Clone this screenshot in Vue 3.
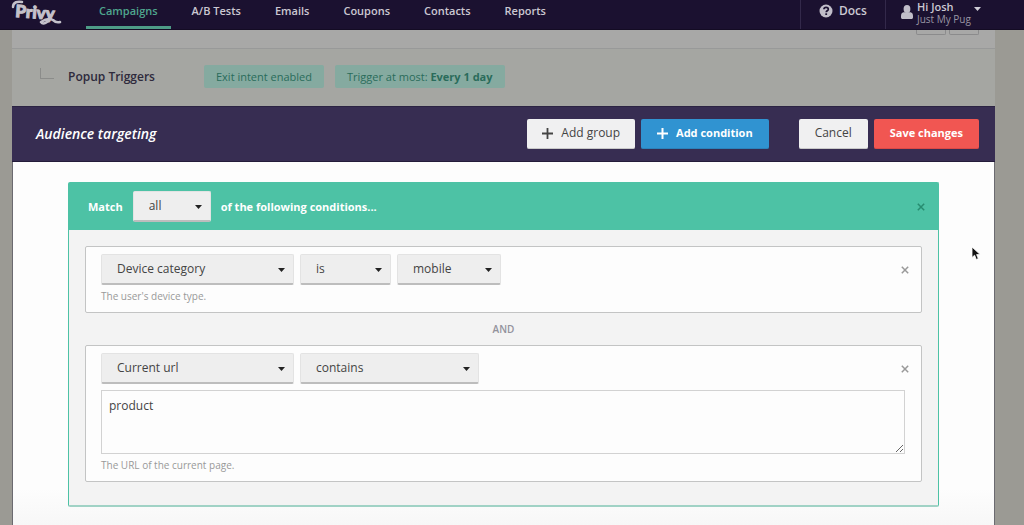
<script setup>
import { ref } from 'vue'

const links = ['Campaigns', 'A/B Tests', 'Emails', 'Coupons', 'Contacts', 'Reports']
const active = 'Campaigns'
const match = ref('all')

const conditions = ref([
  {
    id: 'device',
    hint: "The user's device type.",
    selects: [
      { label: 'Attribute', value: 'Device category', size: 'wide' },
      { label: 'Operator', value: 'is', size: 'small' },
      { label: 'Value', value: 'mobile', size: 'medium' },
    ],
  },
  {
    id: 'url',
    hint: 'The URL of the current page.',
    text: 'product',
    selects: [
      { label: 'Attribute', value: 'Current url', size: 'wide' },
      { label: 'Operator', value: 'contains', size: 'large' },
    ],
  },
])
</script>

<template>
  <div class="page">
    <header class="topbar">
      <a class="logo" href="#" aria-label="Privy">
        <svg width="54" height="27" viewBox="0 0 54 27" aria-hidden="true">
          <text x="4" y="17" transform="rotate(4 4 17)" class="logo-text">Privy</text>
          <path d="M2 7C2 2 7 1 11 2M39 17c-2 6-7 8-9 5 3-2 8-4 12-2 2 2 4 3 7 2" fill="none" stroke="#c4c1ca" stroke-width="2.500" stroke-linecap="round" stroke-linejoin="round" />
        </svg>
      </a>
      <nav class="links" aria-label="Main">
        <a v-for="link in links" :key="link" href="#" :class="{ active: link === active }">{{ link }}</a>
      </nav>
      <a class="docs" href="#">
        <svg width="14" height="14" viewBox="0 0 14 14" aria-hidden="true">
          <circle cx="7" cy="7" r="6.500" fill="#c1bec9" />
          <path d="M4.900 5.300C5 3.900 6 3.300 7.100 3.300c1.200 0 2.200.7 2.200 1.900 0 1.600-2.100 1.600-2.100 3.100" fill="none" stroke="#1b1130" stroke-width="1.700" />
          <rect x="6.300" y="9.300" width="1.800" height="1.700" fill="#1b1130" />
        </svg>
        Docs
      </a>
      <button class="account" type="button">
        <svg class="person" width="12" height="14" viewBox="0 0 12 14" aria-hidden="true">
          <ellipse cx="6" cy="4" rx="3.400" ry="4" fill="#c1bec9" />
          <path d="M2.500 7.200h7C11.300 7.600 12 9 12 11v1.500c0 .9-.7 1.500-1.600 1.500H1.600C.7 14 0 13.400 0 12.500V11c0-2 .7-3.400 2.500-3.800z" fill="#c1bec9" />
        </svg>
        <span class="who"><span class="hi">Hi Josh</span><span class="shop">Just My Pug</span></span>
        <svg class="acc-caret" width="7" height="4" viewBox="0 0 7 4" aria-hidden="true"><path d="M0 0h7L3.500 4z" fill="#d0ced6" /></svg>
      </button>
    </header>

    <main class="sheet">
      <div class="strip"><span class="stub"></span><span class="stub"></span></div>
      <section class="triggers">
        <span class="elbow"></span>
        <h2>Popup Triggers</h2>
        <span class="tag">Exit intent enabled</span>
        <span class="tag">Trigger at most: <b>Every 1 day</b></span>
      </section>

      <section class="targeting">
        <div class="bar">
          <h1>Audience targeting</h1>
          <button class="btn add" type="button">
            <svg width="11" height="11" viewBox="0 0 11 11" aria-hidden="true"><path d="M5.500 0v11M0 5.500h11" stroke="currentColor" stroke-width="1.800" /></svg>
            Add group
          </button>
          <button class="btn add blue" type="button">
            <svg width="11" height="11" viewBox="0 0 11 11" aria-hidden="true"><path d="M5.500 0v11M0 5.500h11" stroke="currentColor" stroke-width="2" /></svg>
            Add condition
          </button>
          <button class="btn cancel" type="button">Cancel</button>
          <button class="btn red" type="button">Save changes</button>
        </div>

        <div class="body">
          <div class="group">
            <div class="group-head">
              <label for="match">Match</label>
              <span class="pick match">
                <select id="match" v-model="match"><option>all</option><option>any</option></select>
                <svg width="7" height="4" viewBox="0 0 7 4" aria-hidden="true"><path d="M0 0h7L3.500 4z" fill="#222" /></svg>
              </span>
              <span class="rest">of the following conditions...</span>
              <button class="close" type="button" aria-label="Remove group">
                <svg width="8" height="8" viewBox="0 0 8 8" aria-hidden="true"><path d="M.8.800l6.400 6.400M7.200.800L.8 7.200" stroke="currentColor" stroke-width="1.500" /></svg>
              </button>
            </div>

            <div class="group-body">
              <template v-for="(c, i) in conditions" :key="c.id">
                <p v-if="i" class="and">AND</p>
                <div class="condition">
                  <div class="row">
                    <span v-for="s in c.selects" :key="s.label" class="pick" :class="s.size">
                      <select v-model="s.value" :aria-label="s.label"><option>{{ s.value }}</option></select>
                      <svg width="7" height="4" viewBox="0 0 7 4" aria-hidden="true"><path d="M0 0h7L3.500 4z" fill="#222" /></svg>
                    </span>
                    <button class="close" type="button" aria-label="Remove condition">
                      <svg width="8" height="8" viewBox="0 0 8 8" aria-hidden="true"><path d="M.8.800l6.400 6.400M7.200.800L.8 7.200" stroke="currentColor" stroke-width="1.500" /></svg>
                    </button>
                  </div>
                  <textarea v-if="c.text !== undefined" v-model="c.text" aria-label="URL"></textarea>
                  <p class="hint">{{ c.hint }}</p>
                </div>
              </template>
            </div>
          </div>
        </div>
      </section>
    </main>

    <svg class="pointer" width="11" height="15" viewBox="0 0 11 15" aria-hidden="true">
      <path d="M1 1v10.500l2.600-2.300 1.700 4.300 2-.9-1.700-4h3.600z" fill="#111" stroke="#fff" stroke-width=".8" />
    </svg>
  </div>
</template>

<style>
body {
  background: #9b9a94;
}
</style>

<style scoped>
* {
  box-sizing: border-box;
}
.page {
  display: flex;
  flex-direction: column;
  min-height: 100vh;
  overflow: hidden;
  font-family: "Open Sans", "Noto Sans", sans-serif;
  font-size: 12px;
  line-height: 16px;
  color: #444;
}
h1, h2, p {
  margin: 0;
}
button, select, textarea {
  font: inherit;
  color: inherit;
}
button {
  cursor: pointer;
}
.topbar {
  display: flex;
  height: 30px;
  padding-left: 11px;
  background: #1b1130;
  border-bottom: 1px solid #140c24;
  color: #cbc8d2;
  font-weight: 600;
}
.topbar a {
  color: inherit;
  text-decoration: none;
}
.logo {
  width: 75px;
}
.logo svg {
  display: block;
}
.logo-text {
  font: 900 17px Lato, sans-serif;
  fill: #c4c1ca;
  stroke: #c4c1ca;
  stroke-width: 1px;
}
.links {
  display: flex;
  flex: 1;
  gap: 8px;
  font-size: 11px;
}
.links a {
  padding: 3px 13px 0;
}
.links .active {
  color: #4fa68e;
  border-bottom: 3px solid #4e9c87;
}
.docs {
  display: flex;
  gap: 6px;
  width: 85px;
  padding: 3px 0 0 18px;
  border-left: 1px solid #33294a;
}
.docs svg {
  margin-top: 1px;
}
.account {
  display: flex;
  gap: 4px;
  width: 139px;
  padding: 0 0 0 15px;
  background: none;
  border: 0;
  border-left: 1px solid #33294a;
  color: #cbc8d2;
  font-weight: 600;
  text-align: left;
}
.person {
  margin-top: 5px;
}
.who {
  display: flex;
  flex-direction: column;
  width: 53px;
  white-space: nowrap;
  line-height: 13px;
}
.hi {
  font-size: 11px;
}
.shop {
  font-size: 10px;
  font-weight: 400;
  color: #9995a4;
}
.acc-caret {
  margin-top: 7px;
}
.sheet {
  display: flex;
  flex: 1;
  flex-direction: column;
  margin: 0 29px 0 12px;
  background: #a5a6a2;
}
.strip {
  display: flex;
  justify-content: flex-end;
  gap: 3px;
  height: 19px;
  padding-right: 16px;
  background: #a8a8a7;
  border-bottom: 1px solid #989999;
}
.stub {
  width: 30px;
  height: 5px;
  border: 1px solid #8b8b8c;
  border-top: 0;
  border-radius: 0 0 2px 2px;
}
.triggers {
  display: flex;
  align-items: center;
  height: 57px;
  padding: 0 28px 2px;
}
.elbow {
  width: 14px;
  height: 11px;
  margin: 0 14px 6px 0;
  border: solid #8b8c8a;
  border-width: 0 0 1px 1px;
}
h2 {
  width: 136px;
  font-size: 12px;
  font-weight: 600;
  color: #2e2a3c;
}
.tag {
  margin-right: 11px;
  padding: 4px 12px 3px;
  border-radius: 2px;
  background: #85aaa0;
  color: #2a6c5b;
  font-size: 11px;
}
.targeting {
  display: flex;
  flex: 1;
  flex-direction: column;
}
.bar {
  display: flex;
  align-items: center;
  height: 56px;
  padding: 0 16px 1px 24px;
  background: #372d52;
  border-top: 1px solid #2b2343;
  border-bottom: 1px solid #241c3a;
}
h1 {
  flex: 1;
  font-size: 14px;
  font-style: italic;
  font-weight: 600;
  line-height: 20px;
  color: #fff;
}
.btn {
  height: 30px;
  padding: 0 16px;
  border: 0;
  border-bottom: 1px solid #c9c9c9;
  border-radius: 2px;
  background: #f0f0f1;
  white-space: nowrap;
}
.add {
  display: flex;
  align-items: center;
  gap: 8px;
  margin-right: 6px;
  padding: 0 15px;
}
.blue {
  margin-right: 30px;
  padding: 0 16px;
  background: #3093d1;
  border-color: #2b82bb;
  color: #fff;
  font-size: 11px;
  font-weight: 700;
}
.cancel {
  margin-right: 6px;
}
.red {
  background: #f15652;
  border-color: #dc4946;
  color: #fff;
  font-size: 11px;
  font-weight: 700;
}
.body {
  flex: 1;
  padding: 20px 55px 18px;
  border: solid #6b6a70;
  border-width: 0 1px;
  background: linear-gradient(#fdfdfd 90%, #f7f7f7);
}
.group {
  border: 1px solid #4dc2a5;
  border-bottom: 2px solid #a0d2c5;
  border-radius: 2px;
  background: #f3f3f3;
}
.group-head {
  display: flex;
  align-items: center;
  height: 47px;
  padding: 0 12px 0 19px;
  background: #4dc2a5;
  color: #fff;
  font-size: 11px;
  font-weight: 700;
}
.pick {
  position: relative;
  display: block;
}
.pick select {
  display: block;
  width: 100%;
  height: 31px;
  padding: 0 24px 0 15px;
  appearance: none;
  border: 1px solid #e3e3e3;
  border-bottom: 2px solid #bdbdbd;
  border-radius: 2px;
  background: #eee;
  color: #444;
  font-size: 12px;
  font-weight: 400;
}
.pick svg {
  position: absolute;
  top: 14px;
  right: 9px;
  pointer-events: none;
}
.match {
  width: 78px;
  margin: 0 10px;
}
.rest {
  flex: 1;
}
.wide {
  width: 193px;
}
.small {
  width: 91px;
}
.medium {
  width: 104px;
}
.large {
  width: 179px;
}
.close {
  display: grid;
  width: 10px;
  height: 16px;
  padding: 0;
  place-items: center;
  border: 0;
  background: none;
  color: #278c70;
}
.group-body {
  padding: 16px 16px 23px;
}
.condition {
  padding: 7px 16px 8px 15px;
  border: 1px solid #c3c4c4;
  border-radius: 2px;
  background: #fdfdfd;
}
.row {
  display: flex;
  align-items: center;
  gap: 6px;
}
.row .close {
  margin: 0 -5px 0 auto;
  color: #999;
}
.and {
  padding: 8px 0;
  font-size: 10px;
  font-weight: 600;
  text-align: center;
  color: #92929c;
}
textarea {
  display: block;
  width: 100%;
  height: 64px;
  margin: 6px 0 0;
  padding: 7px;
  border: 1px solid #d2d2d2;
  border-radius: 0;
  background: #fdfdfd;
  resize: both;
}
.hint {
  padding-top: 3px;
  font-size: 10px;
  color: #999;
}
.pointer {
  position: absolute;
  top: 246px;
  left: 971px;
  pointer-events: none;
}
</style>
